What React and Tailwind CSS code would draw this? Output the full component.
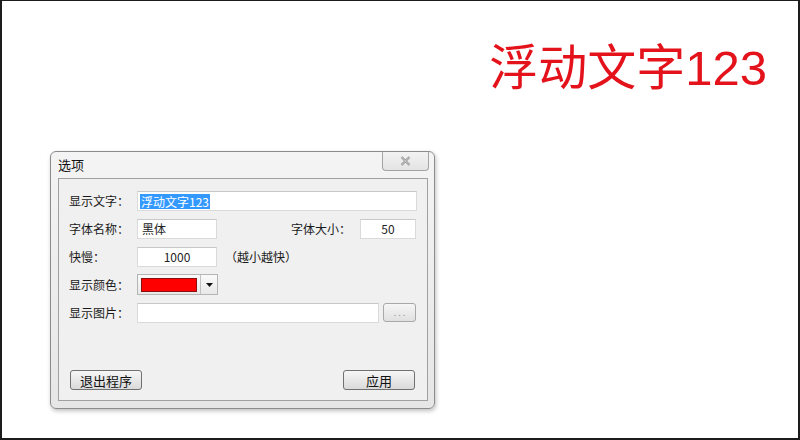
const font = { fontFamily: '"Noto Sans CJK SC", "Noto Sans", sans-serif' };
const bigFont = { fontFamily: '"Liberation Sans", "Noto Sans CJK SC", sans-serif' };

function Field({ className = "", children }) {
  return (
    <div
      className={
        "h-[20px] bg-white border border-[#dadada] border-t-[#c8c8c8] flex items-center text-[12px] text-[#222] " +
        className
      }
    >
      {children}
    </div>
  );
}

function Label({ children }) {
  return <div className="w-[68px] text-[12px] text-[#1a1a1a] leading-none">{children}</div>;
}

function Button({ children }) {
  return (
    <button className="w-[72px] h-[20px] border border-[#707070] rounded-[3px] bg-gradient-to-b from-[#f6f6f6] to-[#dadada] text-[13px] text-[#111] leading-none flex items-center justify-center">
      {children}
    </button>
  );
}

export default function App() {
  return (
    <div
      className="w-[800px] h-[440px] bg-white border-t border-l-2 border-r-2 border-b-2 border-[#1c1c1c] flex flex-col"
      style={font}
    >
      {/* floating text */}
      <div className="h-[150px] flex justify-end pr-[31px] pt-[37px]">
        <div className="text-[49px] leading-[60px] text-[#e3121b]" style={bigFont}>
          浮动文字123
        </div>
      </div>

      {/* options dialog */}
      <div className="ml-[48px] w-[385px] h-[258px] border border-[#8c8c8c] rounded-[6px] bg-gradient-to-b from-[#f4f4f4] to-[#e6e6e6] shadow-[1px_2px_4px_rgba(0,0,0,0.25)] flex flex-col">
        <div className="h-[26px] flex items-start justify-between pl-[7px] pr-[5px]">
          <div className="text-[13px] text-[#111] pt-[6px] leading-none">选项</div>
          <div className="w-[47px] h-[19px] border border-t-0 border-[#a3a3a3] rounded-b-[4px] bg-gradient-to-b from-[#f2f2f2] to-[#e4e4e4] flex items-center justify-center">
            <svg width="11" height="10" viewBox="0 0 11 10">
              <path d="M1.5 1 L9.5 9 M9.5 1 L1.5 9" stroke="#8a8a8a" strokeWidth="2.2" />
              <path d="M1.5 1 L9.5 9 M9.5 1 L1.5 9" stroke="#e8e8e8" strokeWidth="0.8" />
            </svg>
          </div>
        </div>

        <div className="ml-[7px] mr-[6px] mb-[7px] flex-1 border border-[#a0a0a0] bg-[#f0f0f0] pl-[10px] pt-[12px] flex flex-col">
          <div className="flex items-center h-[20px]">
            <Label>显示文字：</Label>
            <Field className="w-[280px] pl-[2px]">
              <span className="bg-[#3399ff] text-white leading-[15px] px-[1px]">浮动文字123</span>
            </Field>
          </div>

          <div className="flex items-center h-[20px] mt-[8px]">
            <Label>字体名称：</Label>
            <Field className="w-[80px] pl-[4px]">黑体</Field>
            <div className="ml-[74px] w-[69px] text-[12px] text-[#1a1a1a]">字体大小：</div>
            <Field className="w-[56px] justify-center">50</Field>
          </div>

          <div className="flex items-center h-[20px] mt-[8px]">
            <Label>快慢：</Label>
            <Field className="w-[80px] justify-center text-[11px]">1000</Field>
            <div className="ml-[8px] text-[12px] text-[#1a1a1a]">（越小越快）</div>
          </div>

          <div className="flex items-center h-[21px] mt-[7px]">
            <Label>显示颜色：</Label>
            <div className="w-[81px] h-[21px] border border-[#b5b5b5] bg-gradient-to-b from-[#fafafa] to-[#e8e8e8] flex items-center pl-[3px]">
              <div className="w-[56px] h-[14px] bg-[#ff0000] border border-[#8a1010]" />
              <div className="ml-[3px] w-px h-[19px] bg-[#c0c0c0]" />
              <div className="flex-1 flex justify-center">
                <svg width="7" height="4" viewBox="0 0 7 4">
                  <path d="M0 0 H7 L3.5 4 Z" fill="#111" />
                </svg>
              </div>
            </div>
          </div>

          <div className="flex items-center h-[21px] mt-[7px]">
            <Label>显示图片：</Label>
            <Field className="w-[242px]" />
            <div className="ml-[4px] w-[33px] h-[19px] border border-[#a8a8a8] rounded-[3px] bg-gradient-to-b from-[#f6f6f6] to-[#e0e0e0] flex items-center justify-center text-[9px] text-[#999] leading-none">
              . . .
            </div>
          </div>

          <div className="flex-1" />

          <div className="flex justify-between pr-[12px] pb-[10px] pl-[1px]">
            <Button>退出程序</Button>
            <Button>应用</Button>
          </div>
        </div>
      </div>
    </div>
  );
}
